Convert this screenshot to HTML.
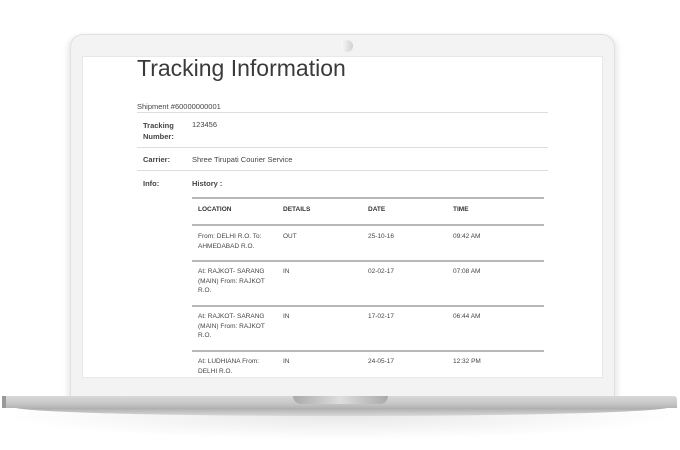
<!DOCTYPE html>
<html><head><meta charset="utf-8"><style>
*{margin:0;padding:0;box-sizing:border-box}
body{width:680px;height:450px;background:#fff;position:relative;overflow:hidden;font-family:"Liberation Sans",sans-serif;color:#333}
.a{position:absolute}
.lid{left:70px;top:34px;width:545px;height:366px;border-radius:13px 13px 0 0;background:#f3f3f3;border:1px solid #e0e0e0;box-shadow:-3px 2px 6px rgba(0,0,0,.08),3px 2px 6px rgba(0,0,0,.08)}
.screen{left:82px;top:56px;width:521px;height:322px;background:#fff;border:1px solid #e8e8e8}
.cam{left:341px;top:40px;width:12px;height:12px;border-radius:50%;background:linear-gradient(90deg,#fafafa,#d0d0d0)}
.base{left:4px;top:396px;width:673px;height:12px;background:linear-gradient(180deg,#d8d8d8,#cbcbcb 50%,#b4b4b4);border-radius:2px 3px 0 0}
.base:before{content:"";position:absolute;left:-2px;top:0;width:4px;height:12px;background:#999}
.bot{left:14px;top:407px;width:655px;height:9px;background:linear-gradient(180deg,#a8a8a8,#d8d8d8);border-radius:0 0 50% 50%/0 0 100% 100%}
.shadow{left:0;top:405px;width:680px;height:35px;background:radial-gradient(ellipse at 50% 30%,rgba(0,0,0,.09),rgba(0,0,0,0) 70%)}
.notch{left:293px;top:396px;width:95px;height:8px;background:linear-gradient(90deg,#aaa,#ddd 50%,#aaa);border-radius:0 0 8px 8px}
.h{left:137px;top:55px;font-size:23px;color:#3a3a3a;font-weight:normal}
.s{font-size:7.5px;color:#444}
.b{font-weight:bold}
.l1{height:1px;background:#ddd;left:137px;width:411px}
.l2{height:2px;background:#b8b8b8;left:192px;width:352px}
.th{font-size:6.5px;font-weight:bold;color:#333}
.td{font-size:6.5px;color:#444;line-height:9.5px}
</style></head><body>
<div class="a shadow"></div>
<div class="a lid"></div>
<div class="a cam"></div>
<div class="a screen"></div>
<div class="a h">Tracking Information</div>
<div class="a s" style="left:137px;top:102px">Shipment #60000000001</div>
<div class="a l1" style="top:112px"></div>
<div class="a s b" style="left:143px;top:120px;line-height:11px">Tracking<br>Number:</div>
<div class="a s" style="left:192px;top:120px">123456</div>
<div class="a l1" style="top:147px"></div>
<div class="a s b" style="left:143px;top:155px">Carrier:</div>
<div class="a s" style="left:192px;top:155px">Shree Tirupati Courier Service</div>
<div class="a l1" style="top:170px"></div>
<div class="a s b" style="left:143px;top:179px">Info:</div>
<div class="a s b" style="left:192px;top:179px">History :</div>
<div class="a l2" style="top:197px"></div>
<div class="a th" style="left:198px;top:206px">LOCATION</div>
<div class="a th" style="left:283px;top:206px">DETAILS</div>
<div class="a th" style="left:368px;top:206px">DATE</div>
<div class="a th" style="left:453px;top:206px">TIME</div>
<div class="a l2" style="top:224px"></div>
<div class="a td" style="left:198px;top:232px">From: DELHI R.O. To:<br>AHMEDABAD R.O.</div>
<div class="a td" style="left:283px;top:232px">OUT</div>
<div class="a td" style="left:368px;top:232px">25-10-16</div>
<div class="a td" style="left:453px;top:232px">09:42 AM</div>
<div class="a l2" style="top:260px"></div>
<div class="a td" style="left:198px;top:267px">At: RAJKOT- SARANG<br>(MAIN) From: RAJKOT<br>R.O.</div>
<div class="a td" style="left:283px;top:267px">IN</div>
<div class="a td" style="left:368px;top:267px">02-02-17</div>
<div class="a td" style="left:453px;top:267px">07:08 AM</div>
<div class="a l2" style="top:305px"></div>
<div class="a td" style="left:198px;top:312px">At: RAJKOT- SARANG<br>(MAIN) From: RAJKOT<br>R.O.</div>
<div class="a td" style="left:283px;top:312px">IN</div>
<div class="a td" style="left:368px;top:312px">17-02-17</div>
<div class="a td" style="left:453px;top:312px">06:44 AM</div>
<div class="a l2" style="top:350px"></div>
<div class="a td" style="left:198px;top:357px">At: LUDHIANA From:<br>DELHI R.O.</div>
<div class="a td" style="left:283px;top:357px">IN</div>
<div class="a td" style="left:368px;top:357px">24-05-17</div>
<div class="a td" style="left:453px;top:357px">12:32 PM</div>
<div class="a bot"></div>
<div class="a base"></div>
<div class="a notch"></div>
</body></html>
